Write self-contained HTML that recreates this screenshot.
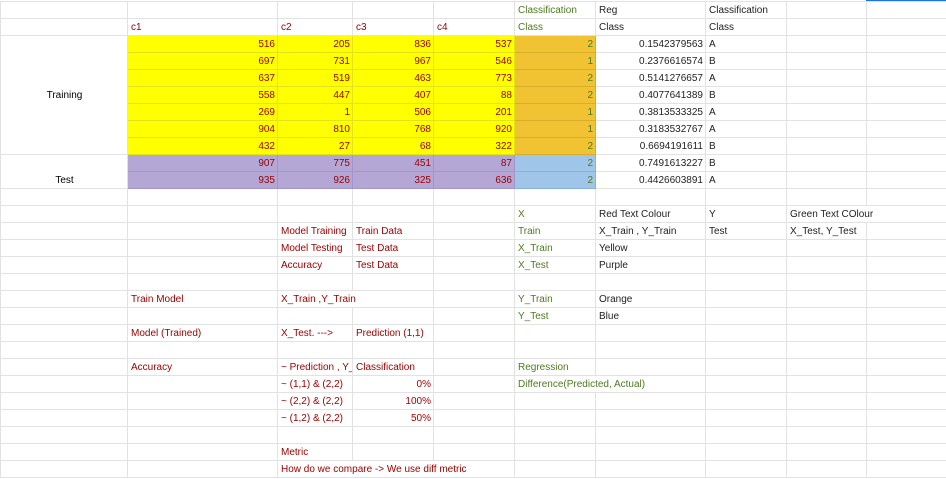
<!DOCTYPE html>
<html><head><meta charset="utf-8"><style>
body{margin:0;background:#fff;width:946px;height:479px;overflow:hidden;position:relative;font-family:"Liberation Sans",Arial,sans-serif;font-size:10px}
table{position:absolute;left:0;top:1px;border-collapse:collapse;table-layout:fixed;width:946px}
td{border:1px solid #e2e2e2;height:14px;padding:2px 2px 0 3px;line-height:14px;white-space:nowrap;overflow:hidden;color:#222;vertical-align:middle}
tr{height:17px}
.r{color:#990000}.g{color:#4f7a21}.n{text-align:right}
.y{background:#ffff00;border-color:#e3e31a}.o{background:#f1c232;border-color:#d9ae2a}.p{background:#b4a7d6;border-color:#a295c9}.b{background:#9fc5e8;border-color:#86b2db}
</style></head><body>
<div style="position:absolute;left:866px;top:0;width:80px;height:2px;background:#1a73e8"></div>
<table>
<colgroup><col style="width:127px"><col style="width:150px"><col style="width:75px"><col style="width:81px"><col style="width:81px"><col style="width:81px"><col style="width:110px"><col style="width:81px"><col style="width:80px"><col style="width:80px"></colgroup>
<tr><td></td><td></td><td></td><td></td><td></td><td class="g">Classification</td><td>Reg</td><td>Classification</td><td></td><td></td></tr>
<tr><td></td><td class="r">c1</td><td class="r">c2</td><td class="r">c3</td><td class="r">c4</td><td class="g">Class</td><td>Class</td><td>Class</td><td></td><td></td></tr>
<tr><td rowspan="7" style="text-align:center;vertical-align:middle;color:#000">Training</td><td class="y r n">516</td><td class="y r n">205</td><td class="y r n">836</td><td class="y r n">537</td><td class="o g n">2</td><td class="n">0.1542379563</td><td>A</td><td></td><td></td></tr>
<tr><td class="y r n">697</td><td class="y r n">731</td><td class="y r n">967</td><td class="y r n">546</td><td class="o g n">1</td><td class="n">0.2376616574</td><td>B</td><td></td><td></td></tr>
<tr><td class="y r n">637</td><td class="y r n">519</td><td class="y r n">463</td><td class="y r n">773</td><td class="o g n">2</td><td class="n">0.5141276657</td><td>A</td><td></td><td></td></tr>
<tr><td class="y r n">558</td><td class="y r n">447</td><td class="y r n">407</td><td class="y r n">88</td><td class="o g n">2</td><td class="n">0.4077641389</td><td>B</td><td></td><td></td></tr>
<tr><td class="y r n">269</td><td class="y r n">1</td><td class="y r n">506</td><td class="y r n">201</td><td class="o g n">1</td><td class="n">0.3813533325</td><td>A</td><td></td><td></td></tr>
<tr><td class="y r n">904</td><td class="y r n">810</td><td class="y r n">768</td><td class="y r n">920</td><td class="o g n">1</td><td class="n">0.3183532767</td><td>A</td><td></td><td></td></tr>
<tr><td class="y r n">432</td><td class="y r n">27</td><td class="y r n">68</td><td class="y r n">322</td><td class="o g n">2</td><td class="n">0.6694191611</td><td>B</td><td></td><td></td></tr>
<tr><td rowspan="2" style="text-align:center;vertical-align:bottom;color:#000">Test</td><td class="p r n">907</td><td class="p r n">775</td><td class="p r n">451</td><td class="p r n">87</td><td class="b g n">2</td><td class="n">0.7491613227</td><td>B</td><td></td><td></td></tr>
<tr><td class="p r n">935</td><td class="p r n">926</td><td class="p r n">325</td><td class="p r n">636</td><td class="b g n">2</td><td class="n">0.4426603891</td><td>A</td><td></td><td></td></tr>
<tr><td></td><td></td><td></td><td></td><td></td><td></td><td></td><td></td><td></td><td></td></tr>
<tr><td></td><td></td><td></td><td></td><td></td><td class="g">X</td><td>Red Text Colour</td><td>Y</td><td colspan="2">Green Text COlour</td></tr>
<tr><td></td><td></td><td class="r">Model Training</td><td class="r">Train Data</td><td></td><td class="g">Train</td><td>X_Train , Y_Train</td><td>Test</td><td>X_Test, Y_Test</td><td></td></tr>
<tr><td></td><td></td><td class="r">Model Testing</td><td class="r">Test Data</td><td></td><td class="g">X_Train</td><td>Yellow</td><td></td><td></td><td></td></tr>
<tr><td></td><td></td><td class="r">Accuracy</td><td class="r">Test Data</td><td></td><td class="g">X_Test</td><td>Purple</td><td></td><td></td><td></td></tr>
<tr><td></td><td></td><td></td><td></td><td></td><td></td><td></td><td></td><td></td><td></td></tr>
<tr><td></td><td class="r">Train Model</td><td class="r" colspan="2">X_Train ,Y_Train</td><td></td><td class="g">Y_Train</td><td>Orange</td><td></td><td></td><td></td></tr>
<tr><td></td><td></td><td></td><td></td><td></td><td class="g">Y_Test</td><td>Blue</td><td></td><td></td><td></td></tr>
<tr><td></td><td class="r">Model (Trained)</td><td class="r">X_Test. ---&gt;</td><td class="r">Prediction (1,1)</td><td></td><td></td><td></td><td></td><td></td><td></td></tr>
<tr><td></td><td></td><td></td><td></td><td></td><td></td><td></td><td></td><td></td><td></td></tr>
<tr><td></td><td class="r">Accuracy</td><td class="r">~ Prediction , Y_Test</td><td class="r">Classification</td><td></td><td class="g">Regression</td><td></td><td></td><td></td><td></td></tr>
<tr><td></td><td></td><td class="r">~ (1,1) &amp; (2,2)</td><td class="r n">0%</td><td></td><td class="g" colspan="2">Difference(Predicted, Actual)</td><td></td><td></td><td></td></tr>
<tr><td></td><td></td><td class="r">~ (2,2) &amp; (2,2)</td><td class="r n">100%</td><td></td><td></td><td></td><td></td><td></td><td></td></tr>
<tr><td></td><td></td><td class="r">~ (1,2) &amp; (2,2)</td><td class="r n">50%</td><td></td><td></td><td></td><td></td><td></td><td></td></tr>
<tr><td></td><td></td><td></td><td></td><td></td><td></td><td></td><td></td><td></td><td></td></tr>
<tr><td></td><td></td><td class="r">Metric</td><td></td><td></td><td></td><td></td><td></td><td></td><td></td></tr>
<tr><td></td><td></td><td class="r" colspan="3">How do we compare -&gt; We use diff metric</td><td></td><td></td><td></td><td></td><td></td></tr>
</table>
</body></html>
